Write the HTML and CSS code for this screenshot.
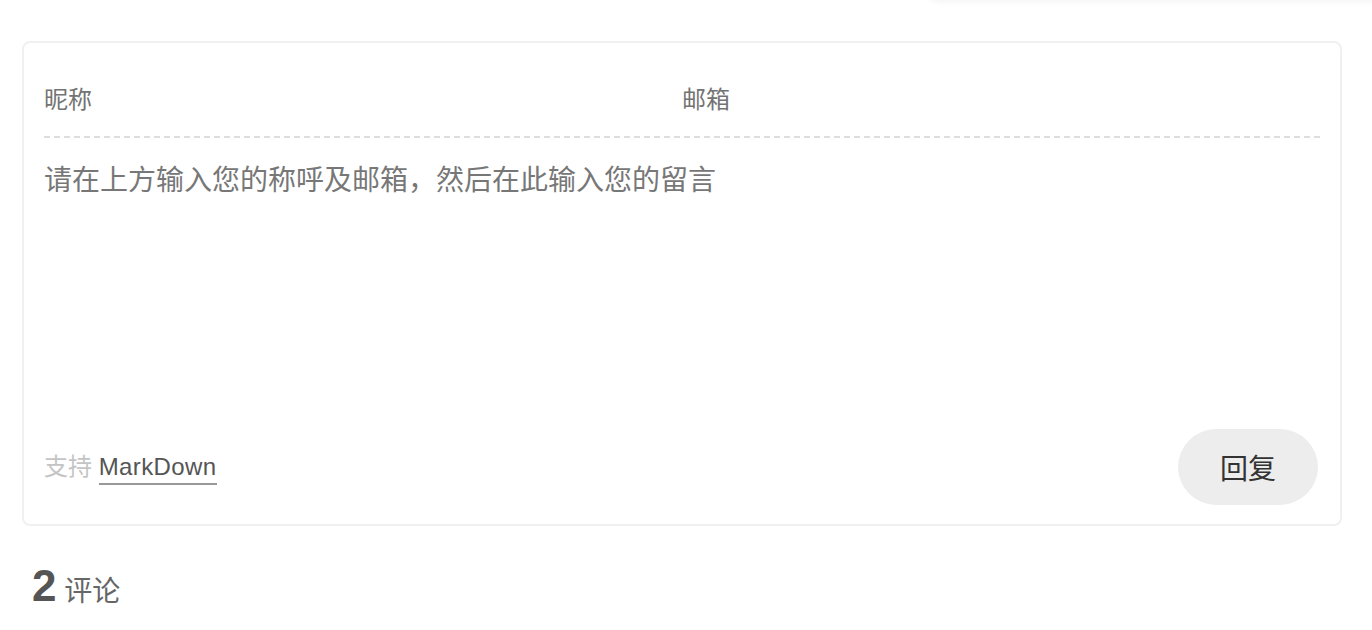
FILE: index.html
```html
<!DOCTYPE html>
<html lang="zh-CN">
<head>
   <meta charset="UTF-8">
   <title>评论</title>
   <link rel="stylesheet" href="styles.css">
</head>
<body>
<div class="top-shade"></div>

<div class="comments">
   <div class="vwrap">
      <div class="vheader">
         <input class="vinput" type="text" placeholder="昵称">
         <input class="vinput" type="email" placeholder="邮箱">
      </div>
      <textarea class="veditor" placeholder="请在上方输入您的称呼及邮箱，然后在此输入您的留言"></textarea>
      <div class="vfooter">
         <div class="vpower">支持 <a class="vlink" href="#">MarkDown</a></div>
         <button class="vsubmit" type="button">回复</button>
      </div>
   </div>

   <div class="vcount"><span class="vnum">2</span><span class="vlabel"> 评论</span></div>
</div>
</body>
</html>
```

FILE: styles.css
```css
* {
   box-sizing: border-box;
}

body {
   margin: 0;
   background: #fff;
   font-family: "Liberation Sans", "Noto Sans CJK SC", sans-serif;
   color: #555;
   overflow: hidden;
}

.top-shade {
   position: absolute;
   top: -40px;
   left: 930px;
   width: 460px;
   height: 40px;
   border-radius: 8px;
   box-shadow: 0 2px 6px rgba(0, 0, 0, 0.05);
}

.comments {
   padding: 41px 30px 0 22px;
}

.vwrap {
   border: 2px solid #f0f0f0;
   border-radius: 8px;
   padding: 20px 22px 19px 20px;
}

.vheader {
   display: flex;
   border-bottom: 2px dashed #dedede;
   margin-right: -2px;
}

.vinput {
   width: 50%;
   border: none;
   outline: none;
   padding: 21px 0 20px;
   font-family: inherit;
   font-size: 24px;
   line-height: 32px;
   height: 73px;
   color: #555;
   background: transparent;
}

.vinput::placeholder {
   color: #737373;
}

.veditor {
   display: block;
   width: 100%;
   height: 291px;
   border: none;
   outline: none;
   resize: none;
   padding: 22px 0 0;
   font-family: inherit;
   font-size: 28px;
   line-height: 42px;
   color: #555;
   background: transparent;
}

.veditor::placeholder {
   color: #777;
}

.vfooter {
   display: flex;
   justify-content: space-between;
   align-items: center;
}

.vpower {
   font-size: 24px;
   color: #c4c4c4;
   line-height: 32px;
}

.vlink {
   color: #555;
   text-decoration: none;
   letter-spacing: 0.4px;
   border-bottom: 2px solid #999;
   padding-bottom: 3px;
}

.vsubmit {
   width: 140px;
   height: 76px;
   border: none;
   border-radius: 38px;
   background: #ededed;
   color: #333;
   font-family: inherit;
   font-size: 28px;
}

.vcount {
   margin-top: 32px;
   padding-left: 10px;
   line-height: 56px;
}

.vnum {
   font-size: 44px;
   font-weight: bold;
   color: #555;
}

.vlabel {
   font-size: 28px;
   color: #666;
}
```
